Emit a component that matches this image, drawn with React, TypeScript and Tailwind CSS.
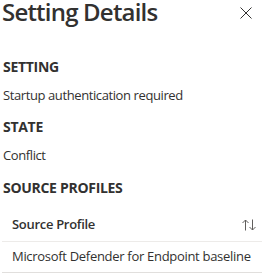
export default function App() {
  return (
    <div className="w-[271px] h-[276px] bg-white text-[#323130] overflow-hidden" style={{ fontFamily: '"Segoe UI", "Open Sans", sans-serif' }}>
      <div className="flex items-start justify-between pl-[2px] pr-[19px]">
        <h1 className="text-[24px] leading-[24px] font-semibold tracking-[-0.8px]">Setting Details</h1>
        <button className="mt-[7px] text-[#323130]" aria-label="Close">
          <svg width="12" height="12" viewBox="0 0 12 12" fill="none" stroke="currentColor" strokeWidth="1">
            <path d="M0.5 0.5 L11.5 11.5 M11.5 0.5 L0.5 11.5" />
          </svg>
        </button>
      </div>

      <div className="pl-[2px] pr-[9px] mt-[33px]">
        <div className="pl-[1px]">
          <h2 className="text-[14px] leading-[20px] font-bold tracking-[-0.3px]">SETTING</h2>
          <p className="text-[13px] leading-[20px] tracking-[-0.4px] mt-[8px]">Startup authentication required</p>
          <h2 className="text-[14px] leading-[20px] font-bold tracking-[-0.3px] mt-[12px]">STATE</h2>
          <p className="text-[13px] leading-[20px] tracking-[-0.4px] mt-[8px]">Conflict</p>
          <h2 className="text-[14px] leading-[20px] font-bold tracking-[-0.3px] mt-[13px]">SOURCE PROFILES</h2>
        </div>

        <div className="mt-[10px]">
          <div className="flex items-center justify-between h-[34px] border-b border-[#edebe9] pl-[10px] pr-[6px]">
            <span className="text-[13px] font-semibold tracking-[-0.3px]">Source Profile</span>
            <svg width="14" height="12" viewBox="0 0 14 12" fill="none" stroke="#605e5c" strokeWidth="1" className="mt-[1px]">
              <path d="M3.5 11.5 V1 M0.5 4 L3.5 1 L6.5 4" />
              <path d="M10.5 0.5 V11 M7.5 8 L10.5 11 L13.5 8" />
            </svg>
          </div>
          <div className="flex items-center h-[31px] border-b border-[#e1dfdd] pl-[10px]">
            <span className="text-[13px] tracking-[-0.3px]">Microsoft Defender for Endpoint baseline</span>
          </div>
        </div>
      </div>
    </div>
  )
}
